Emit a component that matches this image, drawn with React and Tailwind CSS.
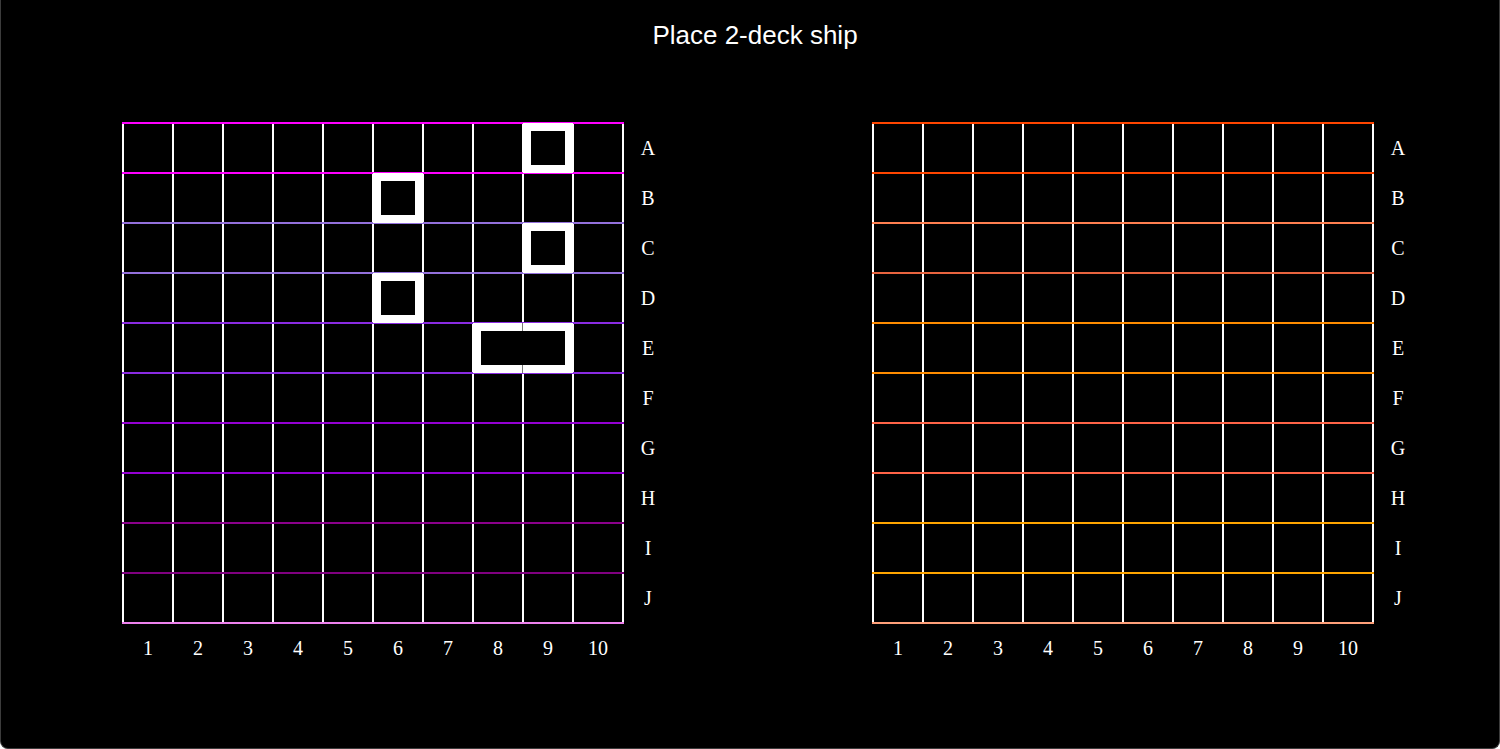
import React from 'react';

const ROWS = ['A', 'B', 'C', 'D', 'E', 'F', 'G', 'H', 'I', 'J'];
const COLS = [1, 2, 3, 4, 5, 6, 7, 8, 9, 10];

// line colours, top to bottom (11 lines: 10 row tops + bottom edge)
const leftLines = [
  'border-[#ff00ff]', 'border-[#ff00ff]', 'border-[#9370db]', 'border-[#9370db]',
  'border-[#8a2be2]', 'border-[#8a2be2]', 'border-[#9400d3]', 'border-[#9400d3]',
  'border-[#8b008b]', 'border-[#800080]', 'border-[#ee82ee]',
];
const rightLines = [
  'border-[#ff4500]', 'border-[#ff4500]', 'border-[#ff7f50]', 'border-[#e8643f]',
  'border-[#ff8c00]', 'border-[#ff8c00]', 'border-[#ff6347]', 'border-[#ff6347]',
  'border-[#ffa500]', 'border-[#ffa500]', 'border-[#ffa07a]',
];

// placed ships: row, col, length (horizontal)
const ships = [
  { r: 0, c: 8, len: 1 },
  { r: 1, c: 5, len: 1 },
  { r: 2, c: 8, len: 1 },
  { r: 3, c: 5, len: 1 },
  { r: 4, c: 7, len: 2 },
];

const Ship = ({ len }) => (
  <div
    className={`absolute -left-px -top-px z-10 h-[50px] border-[8px] border-white bg-black ${
      len === 2 ? 'w-[100px]' : 'w-[50px]'
    }`}
  >
    {len === 2 && (
      <>
        <div className="absolute left-[41px] -top-[8px] h-[8px] w-px bg-[#777]" />
        <div className="absolute left-[41px] -bottom-[8px] h-[8px] w-px bg-[#777]" />
      </>
    )}
  </div>
);

const Board = ({ lines, withShips }) => (
  <div className="flex flex-col" style={{ fontFamily: '"Liberation Serif", "Times New Roman", serif' }}>
    <div className="flex">
      <div className={`flex w-[502px] flex-col border-b-2 ${lines[10]}`}>
        {ROWS.map((row, r) => (
          <div key={row} className={`flex h-[50px] border-t-2 ${lines[r]}`}>
            {COLS.map((col, c) => {
              const ship = withShips && ships.find((s) => s.r === r && s.c === c);
              return (
                <div
                  key={col}
                  className={`relative h-full w-[50px] border-l-2 border-white ${c === 9 ? 'border-r-2 w-[52px]' : ''}`}
                >
                  {ship && <Ship len={ship.len} />}
                </div>
              );
            })}
          </div>
        ))}
      </div>
      <div className="flex w-[48px] flex-col">
        {ROWS.map((row) => (
          <div key={row} className="flex h-[50px] items-center justify-center pt-[2px] text-[20px] text-white">
            {row}
          </div>
        ))}
      </div>
    </div>
    <div className="flex h-[48px]">
      {COLS.map((col) => (
        <div key={col} className="flex w-[50px] items-center justify-center pl-[2px] text-[20px] text-white">
          {col}
        </div>
      ))}
    </div>
  </div>
);

export default function App() {
  return (
    <div className="h-[749px] w-full overflow-hidden rounded-b-lg border-x border-b border-[#3c3c3c] bg-black">
      <div
        className="pl-[10px] pt-[20px] text-center text-[26px] leading-[30px] text-white"
        style={{ fontFamily: '"Liberation Sans", Arial, sans-serif' }}
      >
        Place 2-deck ship
      </div>
      <div className="mt-[72px] flex gap-[200px] pl-[121px]">
        <Board lines={leftLines} withShips />
        <Board lines={rightLines} />
      </div>
    </div>
  );
}
